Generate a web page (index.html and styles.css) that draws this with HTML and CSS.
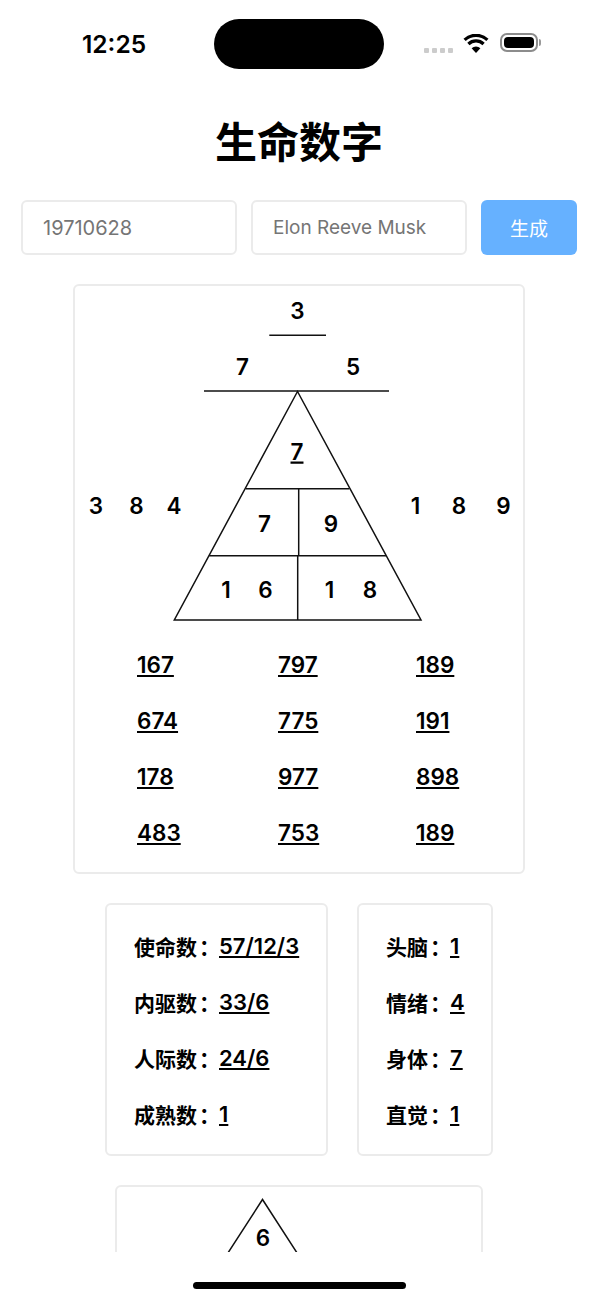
FILE: index.html
```html
<!DOCTYPE html>
<html lang="zh-CN">
<head>
  <meta charset="UTF-8">
  <meta name="viewport" content="width=device-width, initial-scale=1.0">
  <title>生命数字</title>
  <link rel="stylesheet" href="styles.css">
</head>
<body>
  <div class="status-bar">
    <div class="time">12:25</div>
    <div class="island"></div>
    <div class="status-icons">
      <div class="signal"><i></i><i></i><i></i><i></i></div>
      <svg class="wifi" width="26" height="19" viewBox="0 0 26 19" aria-label="Wi-Fi">
        <path d="M13 19 L8.6 14.2 A6.4 6.4 0 0 1 17.4 14.2 Z" fill="#000"/>
        <path d="M5.4 10 A11 11 0 0 1 20.6 10" fill="none" stroke="#000" stroke-width="3.2"/>
        <path d="M1.6 5.9 A16.4 16.4 0 0 1 24.4 5.9" fill="none" stroke="#000" stroke-width="3.2"/>
      </svg>
      <div class="battery"><div class="battery-fill"></div></div>
      <div class="battery-cap"></div>
    </div>
  </div>

  <div class="content">
    <h1 class="page-title">生命数字</h1>

    <div class="form-row">
      <input type="text" class="text-input" placeholder="19710628" aria-label="生日">
      <input type="text" class="text-input name-input" placeholder="Elon Reeve Musk" aria-label="姓名">
      <button class="submit-button">生成</button>
    </div>

    <div class="card main-card">
      <svg class="pyramid" width="448" height="340" viewBox="75 286 448 340">
        <g class="lines">
          <line x1="269.3" y1="335.3" x2="326" y2="335.3"/>
          <line x1="204" y1="391" x2="389" y2="391"/>
          <path d="M297.5 391.5 L174.3 620 H421 Z"/>
          <line x1="245.7" y1="488.7" x2="349.3" y2="488.7"/>
          <line x1="209.3" y1="555.7" x2="386" y2="555.7"/>
          <line x1="298.7" y1="488.7" x2="298.7" y2="555.7"/>
          <line x1="297.7" y1="555.7" x2="297.7" y2="620"/>
        </g>
        <g class="nums">
          <text x="297.5" y="318.5">3</text>
          <text x="242.5" y="374.5">7</text>
          <text x="353" y="374.5">5</text>
          <text x="297" y="459.5" class="under">7</text>
          <text x="96" y="514">3</text>
          <text x="136.5" y="514">8</text>
          <text x="174" y="514">4</text>
          <text x="415.5" y="514">1</text>
          <text x="459" y="514">8</text>
          <text x="503.5" y="514">9</text>
          <text x="264.5" y="532">7</text>
          <text x="331" y="532">9</text>
          <text x="226" y="598">1</text>
          <text x="265.5" y="598">6</text>
          <text x="329.5" y="598">1</text>
          <text x="370" y="598">8</text>
        </g>
      </svg>

      <div class="number-grid">
        <u>167</u><u>797</u><u>189</u>
        <u>674</u><u>775</u><u>191</u>
        <u>178</u><u>977</u><u>898</u>
        <u>483</u><u>753</u><u>189</u>
      </div>
    </div>

    <div class="stats-row">
      <div class="card stats-card stats-left">
        <div class="stat"><span class="stat-label">使命数<span class="colon">：</span></span><u>57/12/3</u></div>
        <div class="stat"><span class="stat-label">内驱数<span class="colon">：</span></span><u>33/6</u></div>
        <div class="stat"><span class="stat-label">人际数<span class="colon">：</span></span><u>24/6</u></div>
        <div class="stat"><span class="stat-label">成熟数<span class="colon">：</span></span><u>1</u></div>
      </div>
      <div class="card stats-card stats-right">
        <div class="stat"><span class="stat-label">头脑<span class="colon">：</span></span><u>1</u></div>
        <div class="stat"><span class="stat-label">情绪<span class="colon">：</span></span><u>4</u></div>
        <div class="stat"><span class="stat-label">身体<span class="colon">：</span></span><u>7</u></div>
        <div class="stat"><span class="stat-label">直觉<span class="colon">：</span></span><u>1</u></div>
      </div>
    </div>

    <div class="card small-card">
      <svg class="small-pyramid" width="364" height="110" viewBox="117 1187 364 110">
        <path class="lines" d="M204 1290 L262.5 1199.5 L321 1290"/>
        <text class="nums" x="263" y="1246">6</text>
      </svg>
    </div>
  </div>

  <div class="home-area"><div class="home-bar"></div></div>
</body>
</html>
```

FILE: styles.css
```css
* {
  box-sizing: border-box;
}

body {
  margin: 0;
  width: 598px;
  height: 1300px;
  display: flex;
  flex-direction: column;
  overflow: hidden;
  background: #fff;
  color: #000;
  font-family: 'Inter', 'Noto Sans CJK SC', sans-serif;
}

/* status bar */
.status-bar {
  height: 88px;
  flex-shrink: 0;
  padding-top: 19px;
  display: flex;
  align-items: flex-start;
}

.time {
  width: 214px;
  height: 50px;
  padding-left: 82px;
  line-height: 50px;
  font-size: 24.5px;
  font-weight: 600;
}

.island {
  width: 170px;
  height: 50px;
  border-radius: 25px;
  background: #000;
}

.status-icons {
  display: flex;
  align-items: center;
  height: 19px;
  margin-top: 14px;
  padding-left: 40px;
}

.signal {
  display: flex;
  gap: 3px;
  margin-top: 15px;
}

.signal i {
  width: 5px;
  height: 5px;
  background: #ccc;
  border-radius: 1px;
}

.wifi {
  margin-left: 10px;
  margin-top: 2px;
}

.battery {
  width: 38px;
  height: 19px;
  margin-left: 11px;
  padding: 2px;
  border: 2px solid #8c8c8c;
  border-radius: 7px;
}

.battery-fill {
  height: 100%;
  background: #000;
  border-radius: 4px;
}

.battery-cap {
  width: 2px;
  height: 7px;
  margin-left: 1px;
  background: #999;
  border-radius: 0 2px 2px 0;
}

/* page */
.content {
  flex: 1;
  overflow: hidden;
}

.page-title {
  margin: 0;
  height: 112px;
  padding-top: 26px;
  font-size: 42px;
  line-height: 58px;
  font-weight: 700;
  text-align: center;
}

.form-row {
  display: flex;
  gap: 14px;
  padding-left: 21px;
}

.text-input {
  width: 216px;
  height: 55px;
  padding: 0 20px;
  border: 2px solid #ebebeb;
  border-radius: 6px;
  background: #fff;
  font-family: inherit;
  font-size: 20px;
}

.name-input {
  font-size: 19px;
}

.text-input::placeholder {
  color: #757575;
  opacity: 1;
}

.submit-button {
  width: 96px;
  height: 55px;
  border: none;
  border-radius: 6px;
  background: #66b1ff;
  color: #fff;
  font-family: inherit;
  font-size: 19px;
}

.card {
  background: #fff;
  border: 2px solid #ebebeb;
  border-radius: 6px;
}

.main-card {
  width: 452px;
  height: 590px;
  margin: 29px 0 0 73px;
}

.pyramid,
.small-pyramid {
  display: block;
}

.lines line,
.lines path,
path.lines {
  fill: none;
  stroke: #111;
  stroke-width: 1.5;
}

.nums {
  font-size: 22.5px;
  font-weight: 600;
  text-anchor: middle;
}

.under {
  text-decoration: underline;
}

.number-grid {
  display: grid;
  grid-template-columns: 141px 138px 1fr;
  grid-auto-rows: 56px;
  align-items: center;
  padding: 10px 0 12px 62px;
  font-size: 22.5px;
  font-weight: 600;
}

.number-grid u {
  justify-self: start;
}

.stats-row {
  display: flex;
  justify-content: center;
  gap: 29px;
  margin-top: 29px;
}

.stats-card {
  height: 253px;
  padding-top: 13px;
}

.stats-left {
  width: 223px;
  padding-left: 27px;
}

.stats-right {
  width: 136px;
  padding-left: 27px;
}

.stat {
  height: 56px;
  display: flex;
  align-items: center;
  font-size: 22px;
  font-weight: 600;
}

.stat-label {
  flex-shrink: 0;
  margin-right: 1px;
  font-size: 21px;
  font-weight: 600;
  white-space: nowrap;
}

.colon {
  margin-left: 2px;
  margin-right: -2px;
}

.small-card {
  width: 368px;
  height: 200px;
  margin: 29px 0 0 115px;
}

/* home indicator */
.home-area {
  height: 48px;
  flex-shrink: 0;
  padding: 30px 0 0 193px;
  background: #fff;
}

.home-bar {
  width: 213px;
  height: 7px;
  border-radius: 4px;
  background: #000;
}
```
